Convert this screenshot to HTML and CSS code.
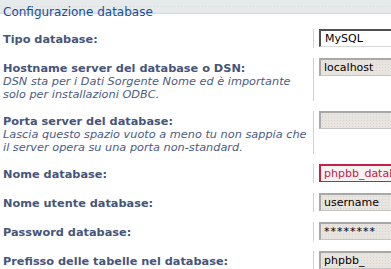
FILE: index.html
```html
<!DOCTYPE html>
<html lang="it">
<head>
  <meta charset="UTF-8" />
  <title>Configurazione database</title>
  <link rel="stylesheet" href="styles.css">
</head>
<body>

<div class="section-title">
  <h2>Configurazione database</h2>
</div>

<div class="form">
  <div class="label"><b>Tipo database:</b></div>
  <div class="field">
    <div class="select">MySQL</div>
  </div>

  <div class="label">
    <b>Hostname server del database o DSN:</b>
    <i>DSN sta per i Dati Sorgente Nome ed è importante solo per installazioni ODBC.</i>
  </div>
  <div class="field">
    <input class="box" type="text" value="localhost">
  </div>

  <div class="label">
    <b>Porta server del database:</b>
    <i>Lascia questo spazio vuoto a meno tu non sappia che il server opera su una porta non-standard.</i>
  </div>
  <div class="field">
    <input class="box" type="text" value="">
  </div>

  <div class="label"><b>Nome database:</b></div>
  <div class="field">
    <input class="box error" type="text" value="phpbb_database">
  </div>

  <div class="label"><b>Nome utente database:</b></div>
  <div class="field">
    <input class="box" type="text" value="username">
  </div>

  <div class="label"><b>Password database:</b></div>
  <div class="field">
    <input class="box secret" type="text" value="********">
  </div>

  <div class="label"><b>Prefisso delle tabelle nel database:</b></div>
  <div class="field">
    <input class="box" type="text" value="phpbb_">
  </div>
</div>

</body>
</html>
```

FILE: styles.css
```css
* {
  margin: 0; padding: 0; box-sizing: border-box;
}
body {
  background: #ffffff;
  font-family: 'DejaVu Sans', Verdana, sans-serif;
  font-size: 11px;
  color: #4a5878;
  overflow: hidden;
  -webkit-font-smoothing: none;
}

.section-title {
  height: 19px;
  background:
    radial-gradient(circle, #d7dcde 0.6px, transparent 0.9px) 0 0 / 3px 3px,
    linear-gradient(#e6eaeb, #e6eaeb) 0 0 / 100% 13px no-repeat,
    linear-gradient(#d4d9db, #d4d9db) 0 13px / 100% 1px no-repeat;
  background-repeat: repeat-x, no-repeat, no-repeat;
  background-size: 3px 13px, 100% 13px, 100% 1px;
}
.section-title h2 {
  font-weight: normal;
  font-size: 12px;
  line-height: 14px;
  padding: 5px 0 0 3px;
  color: #1b4e98;
}

.form {
  display: grid;
  grid-template-columns: 313px 1fr;
  row-gap: 10px;
  padding-top: 10px;
}

.label {
  padding: 4px 0 0 3px;
  font-size: 11.3px;
  line-height: 13px;
  min-height: 19px;
}
.label b {
  display: block;
  font-weight: bold;
  color: #46557a;
}
.label i {
  display: block;
  font-style: italic;
  color: #4d5c82;
}

.field {
  border-left: 1px solid #cfcfcf;
  padding-left: 5px;
  overflow: hidden;
  white-space: nowrap;
}

.select {
  height: 18px;
  width: 100px;
  background: #ffffff;
  border-top: 2px solid #505050;
  border-left: 2px solid #505050;
  border-right: 1px solid #d8d8d8;
  border-bottom: 1px solid #d8d8d8;
  padding: 1px 0 0 4px;
  color: #000;
  line-height: 13px;
}

.box {
  display: block;
  height: 18px;
  width: 100px;
  font-family: 'DejaVu Sans', Verdana, sans-serif;
  font-size: 11px;
  color: #000;
  padding: 0 3px;
  background:
    radial-gradient(circle, #d9d4cf 0.6px, transparent 0.9px) 0 0 / 3px 3px,
    #e8e4e0;
  border: 1px solid #c4c4c4;
  border-top: 2px solid #a8a8a8;
  border-left: 2px solid #a8a8a8;
  outline: none;
}
.box.secret {
  letter-spacing: 1px;
}
.box.error {
  color: #c4204a;
  background: #f6f2f0;
  border: 1px solid #c4204a;
  border-top-width: 2px;
  border-left-width: 2px;
}
```
